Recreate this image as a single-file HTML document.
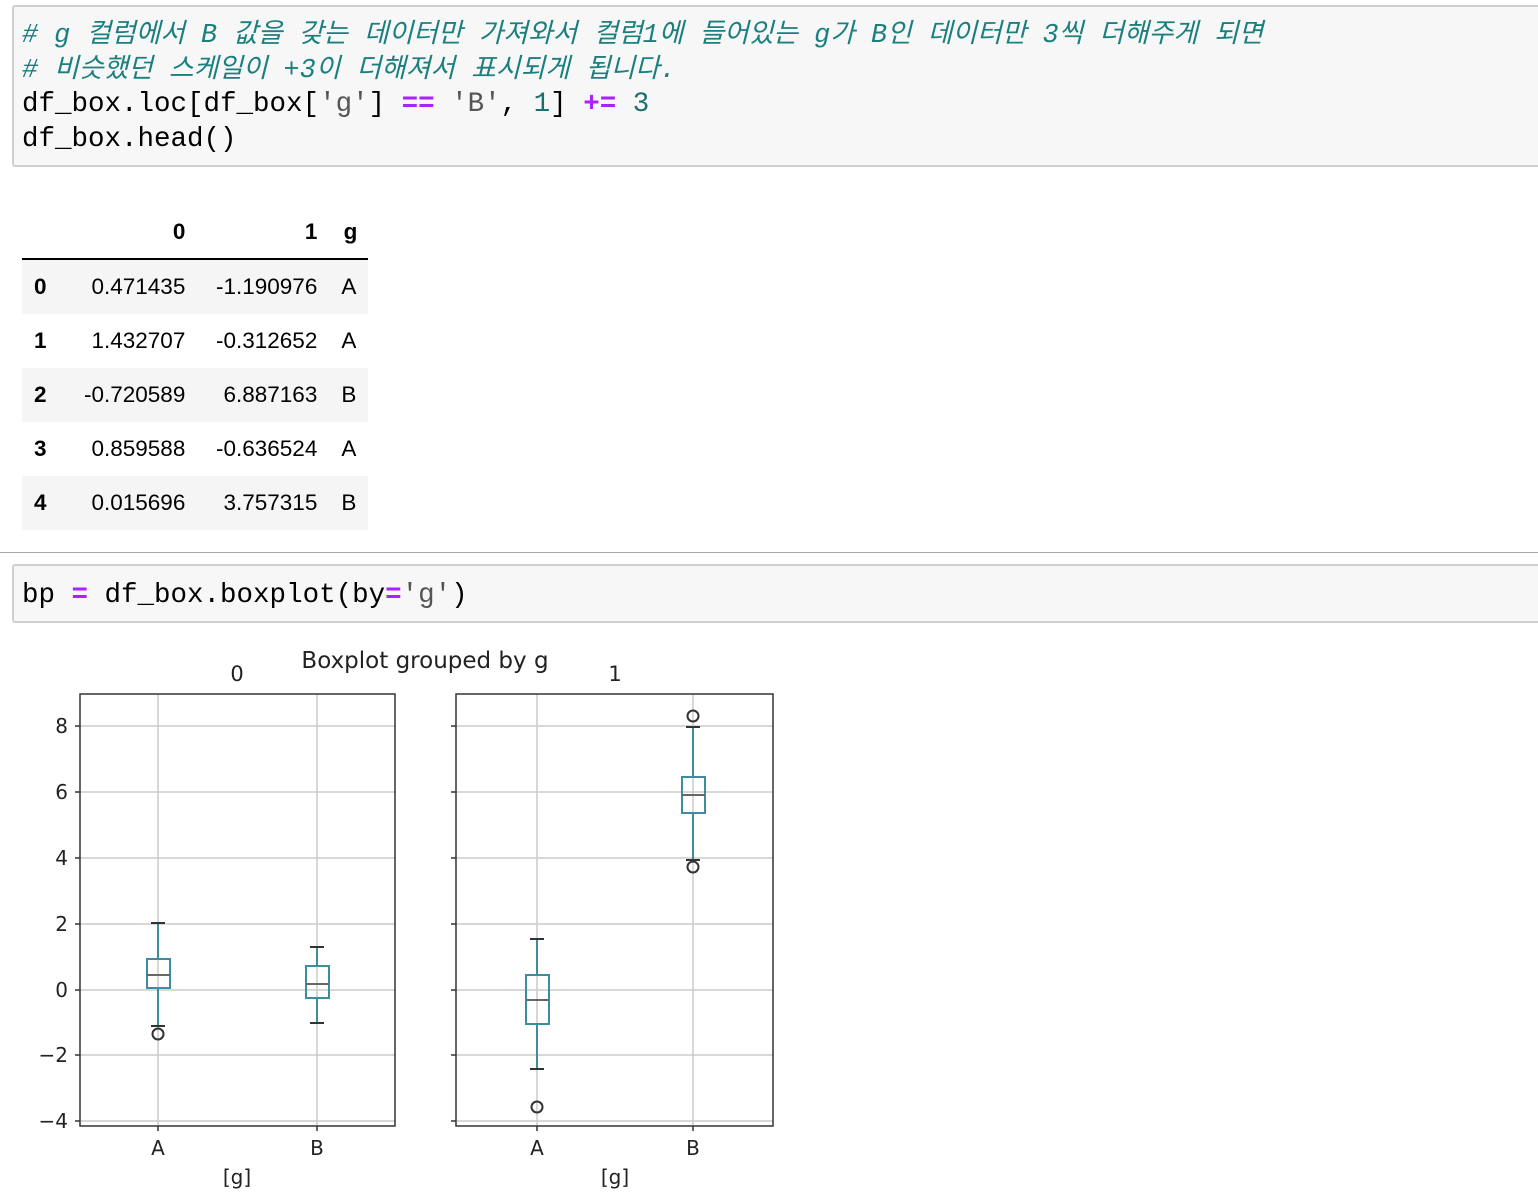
<!DOCTYPE html>
<html><head><meta charset="utf-8"><style>
body{margin:0;width:1538px;height:1204px;background:#fff;position:relative;overflow:hidden;font-family:"Liberation Sans","Noto Sans CJK KR",sans-serif}
.cell{position:absolute;left:12px;width:1530px;background:#f7f7f7;border:2px solid #cfcfcf;border-radius:3px;box-sizing:border-box}
.code{position:absolute;left:22px;font-family:"Liberation Mono","Noto Sans CJK KR",monospace;font-size:27.5px;white-space:pre;color:#000;line-height:34.5px}
.cm{color:#1b7f7f;font-style:italic;font-size:26.8px}
.op{color:#aa22ff;font-weight:bold}
.st{color:#555}
.nm{color:#1b6f6f}
table{position:absolute;left:22px;top:205px;border-collapse:collapse;font-size:22.5px}
td,th{text-align:right;padding:0 12px;height:54px}
th{font-weight:bold}
thead th{height:53px;border-bottom:2px solid #000}
tbody tr:nth-child(odd){background:#f5f5f5}
</style></head><body>
<div class="cell" style="top:5px;height:162px"></div>
<div class="code" style="top:19px"><span class="cm"># g 컬럼에서 B 값을 갖는 데이터만 가져와서 컬럼1에 들어있는 g가 B인 데이터만 3씩 더해주게 되면</span>
<span class="cm"># 비슷했던 스케일이 +3이 더해져서 표시되게 됩니다.</span>
df_box.loc[df_box[<span class="st">'g'</span>] <span class="op">==</span> <span class="st">'B'</span>, <span class="nm">1</span>] <span class="op">+=</span> <span class="nm">3</span>
df_box.head()</div>
<table><thead><tr><th style="width:26px;padding-left:12px"></th><th style="width:100px">0</th><th style="width:108px">1</th><th style="padding-right:11px">g</th></tr></thead>
<tbody>
<tr><th style="padding-left:12px;text-align:left">0</th><td>0.471435</td><td>-1.190976</td><td>A</td></tr>
<tr><th style="padding-left:12px;text-align:left">1</th><td>1.432707</td><td>-0.312652</td><td>A</td></tr>
<tr><th style="padding-left:12px;text-align:left">2</th><td>-0.720589</td><td>6.887163</td><td>B</td></tr>
<tr><th style="padding-left:12px;text-align:left">3</th><td>0.859588</td><td>-0.636524</td><td>A</td></tr>
<tr><th style="padding-left:12px;text-align:left">4</th><td>0.015696</td><td>3.757315</td><td>B</td></tr>
</tbody></table>
<div style="position:absolute;left:0;top:552px;width:1538px;height:1px;background:#aaa"></div>
<div class="cell" style="top:564px;height:59px"></div>
<div class="code" style="top:579px">bp <span class="op">=</span> df_box.boxplot(by<span class="op">=</span><span class="st">'g'</span>)</div>
<svg style="position:absolute;left:0;top:0" width="1538" height="1204" font-family="DejaVu Sans,Liberation Sans,sans-serif" font-size="19" fill="#222">
<text x="425" y="668" text-anchor="middle" font-size="23">Boxplot grouped by g</text>
<text x="237" y="681" text-anchor="middle" font-size="21">0</text>
<text x="615" y="681" text-anchor="middle" font-size="21">1</text>
<g stroke="#ccc" stroke-width="1.5">
<line x1="80" x2="395" y1="726" y2="726"/><line x1="80" x2="395" y1="792" y2="792"/><line x1="80" x2="395" y1="858" y2="858"/><line x1="80" x2="395" y1="924" y2="924"/><line x1="80" x2="395" y1="990" y2="990"/><line x1="80" x2="395" y1="1055" y2="1055"/><line x1="80" x2="395" y1="1121" y2="1121"/>
<line x1="456" x2="773" y1="726" y2="726"/><line x1="456" x2="773" y1="792" y2="792"/><line x1="456" x2="773" y1="858" y2="858"/><line x1="456" x2="773" y1="924" y2="924"/><line x1="456" x2="773" y1="990" y2="990"/><line x1="456" x2="773" y1="1055" y2="1055"/><line x1="456" x2="773" y1="1121" y2="1121"/>
<line x1="158" x2="158" y1="694" y2="1126"/><line x1="317" x2="317" y1="694" y2="1126"/><line x1="537" x2="537" y1="694" y2="1126"/><line x1="693" x2="693" y1="694" y2="1126"/>
</g>
<g stroke="#333" stroke-width="1.5" fill="none">
<rect x="80" y="694" width="315" height="432"/><rect x="456" y="694" width="317" height="432"/>
<path d="M75 726h5M75 792h5M75 858h5M75 924h5M75 990h5M75 1055h5M75 1121h5M451 726h5M451 792h5M451 858h5M451 924h5M451 990h5M451 1055h5M451 1121h5M158 1126v5M317 1126v5M537 1126v5M693 1126v5"/>
</g>
<g font-size="20" text-anchor="end">
<text x="68" y="733">8</text><text x="68" y="799">6</text><text x="68" y="865">4</text><text x="68" y="931">2</text><text x="68" y="997">0</text><text x="68" y="1062">−2</text><text x="68" y="1128">−4</text>
</g>
<g font-size="20" text-anchor="middle">
<text x="158" y="1155">A</text><text x="317" y="1155">B</text><text x="537" y="1155">A</text><text x="693" y="1155">B</text>
<text x="237" y="1184">[g]</text><text x="615" y="1184">[g]</text>
</g>
<g stroke="#3d8ca0" stroke-width="2" fill="none">
<rect x="147" y="959" width="23" height="29"/><path d="M158 959V923M158 988V1026"/>
<rect x="306" y="966" width="23" height="32"/><path d="M317 966V947M317 998V1023"/>
<rect x="526" y="975" width="23" height="49"/><path d="M537 975V939M537 1024V1069"/>
<rect x="682" y="777" width="23" height="36"/><path d="M693 777V727M693 813V860"/>
</g>
<g stroke="#333" stroke-width="2" fill="none">
<path d="M151 923h14M151 1026h14M310 947h14M310 1023h14M530 939h14M530 1069h14M686 727h14M686 860h14"/>
<path d="M147 975h23M306 984h23M526 1000h23M682 795h23" stroke="#666"/>
<circle cx="158" cy="1034" r="5.5"/><circle cx="537" cy="1107" r="5.5"/><circle cx="693" cy="716" r="5.5"/><circle cx="693" cy="867" r="5.5"/>
</g>
</svg>
</body></html>
